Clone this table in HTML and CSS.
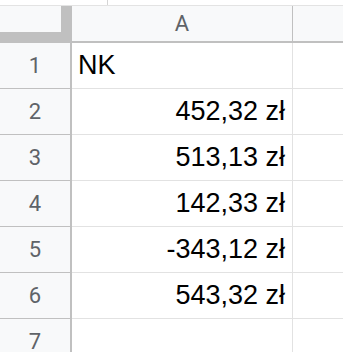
FILE: index.html
```html
<!DOCTYPE html>
<html>
<head>
<meta charset="utf-8">
<link rel="stylesheet" href="styles.css">
</head>
<body>
<div class="topbar">
  <span class="tick t1"></span>
</div>
<div class="header">
  <div class="corner"><div class="corner-inner"></div></div>
  <div class="colhead colA">A</div>
  <div class="colhead colB"></div>
</div>
<div class="row"><div class="rowhead">1</div><div class="cell left">NK</div><div class="cell b"></div></div>
<div class="row"><div class="rowhead">2</div><div class="cell">452,32 zł</div><div class="cell b"></div></div>
<div class="row"><div class="rowhead">3</div><div class="cell">513,13 zł</div><div class="cell b"></div></div>
<div class="row"><div class="rowhead">4</div><div class="cell">142,33 zł</div><div class="cell b"></div></div>
<div class="row"><div class="rowhead">5</div><div class="cell">-343,12 zł</div><div class="cell b"></div></div>
<div class="row"><div class="rowhead">6</div><div class="cell">543,32 zł</div><div class="cell b"></div></div>
<div class="row"><div class="rowhead">7</div><div class="cell"></div><div class="cell b"></div></div>
</body>
</html>
```
FILE: styles.css
```css
html, body {
  margin: 0;
  padding: 0;
  background: #ffffff;
}
body {
  width: 343px;
  height: 352px;
  overflow: hidden;
  font-family: "Liberation Sans", Arial, sans-serif;
}
.topbar {
  height: 5px;
  border-bottom: 1px solid #e3e3e3;
  position: relative;
}
.tick {
  position: absolute;
  top: 0;
  width: 1px;
  height: 5px;
  background: #d5d5d5;
}
.t1 { left: 107px; }
.header {
  display: flex;
  height: 37px;
}
.corner {
  width: 72px;
  height: 37px;
  background: #c0c0c0;
  flex: none;
}
.corner-inner {
  width: 61px;
  height: 26px;
  background: #f8f9fa;
}
.colhead {
  background: #f8f9fa;
  border-bottom: 2px solid #c0c0c0;
  box-sizing: border-box;
  height: 37px;
  font-family: Roboto, sans-serif;
  color: #5f6368;
  font-size: 22px;
  display: flex;
  align-items: center;
  justify-content: center;
}
.colA {
  width: 221px;
  border-right: 1px solid #c0c0c0;
  flex: none;
}
.colB {
  flex: 1;
}
.row {
  display: flex;
  height: 46px;
  box-sizing: border-box;
}
.rowhead {
  width: 72px;
  flex: none;
  box-sizing: border-box;
  background: #f8f9fa;
  border-right: 2px solid #c0c0c0;
  border-bottom: 1px solid #c0c0c0;
  font-family: Roboto, sans-serif;
  color: #5f6368;
  font-size: 22px;
  display: flex;
  align-items: center;
  justify-content: center;
}
.cell {
  width: 221px;
  flex: none;
  box-sizing: border-box;
  border-right: 1px solid #e2e2e2;
  border-bottom: 1px solid #e2e2e2;
  font-size: 27px;
  color: #000;
  display: flex;
  align-items: center;
  justify-content: flex-end;
  padding: 0 7px 0 6px;
}
.cell.left {
  justify-content: flex-start;
}
.cell.b {
  flex: 1;
  width: auto;
  border-right: none;
}
```
